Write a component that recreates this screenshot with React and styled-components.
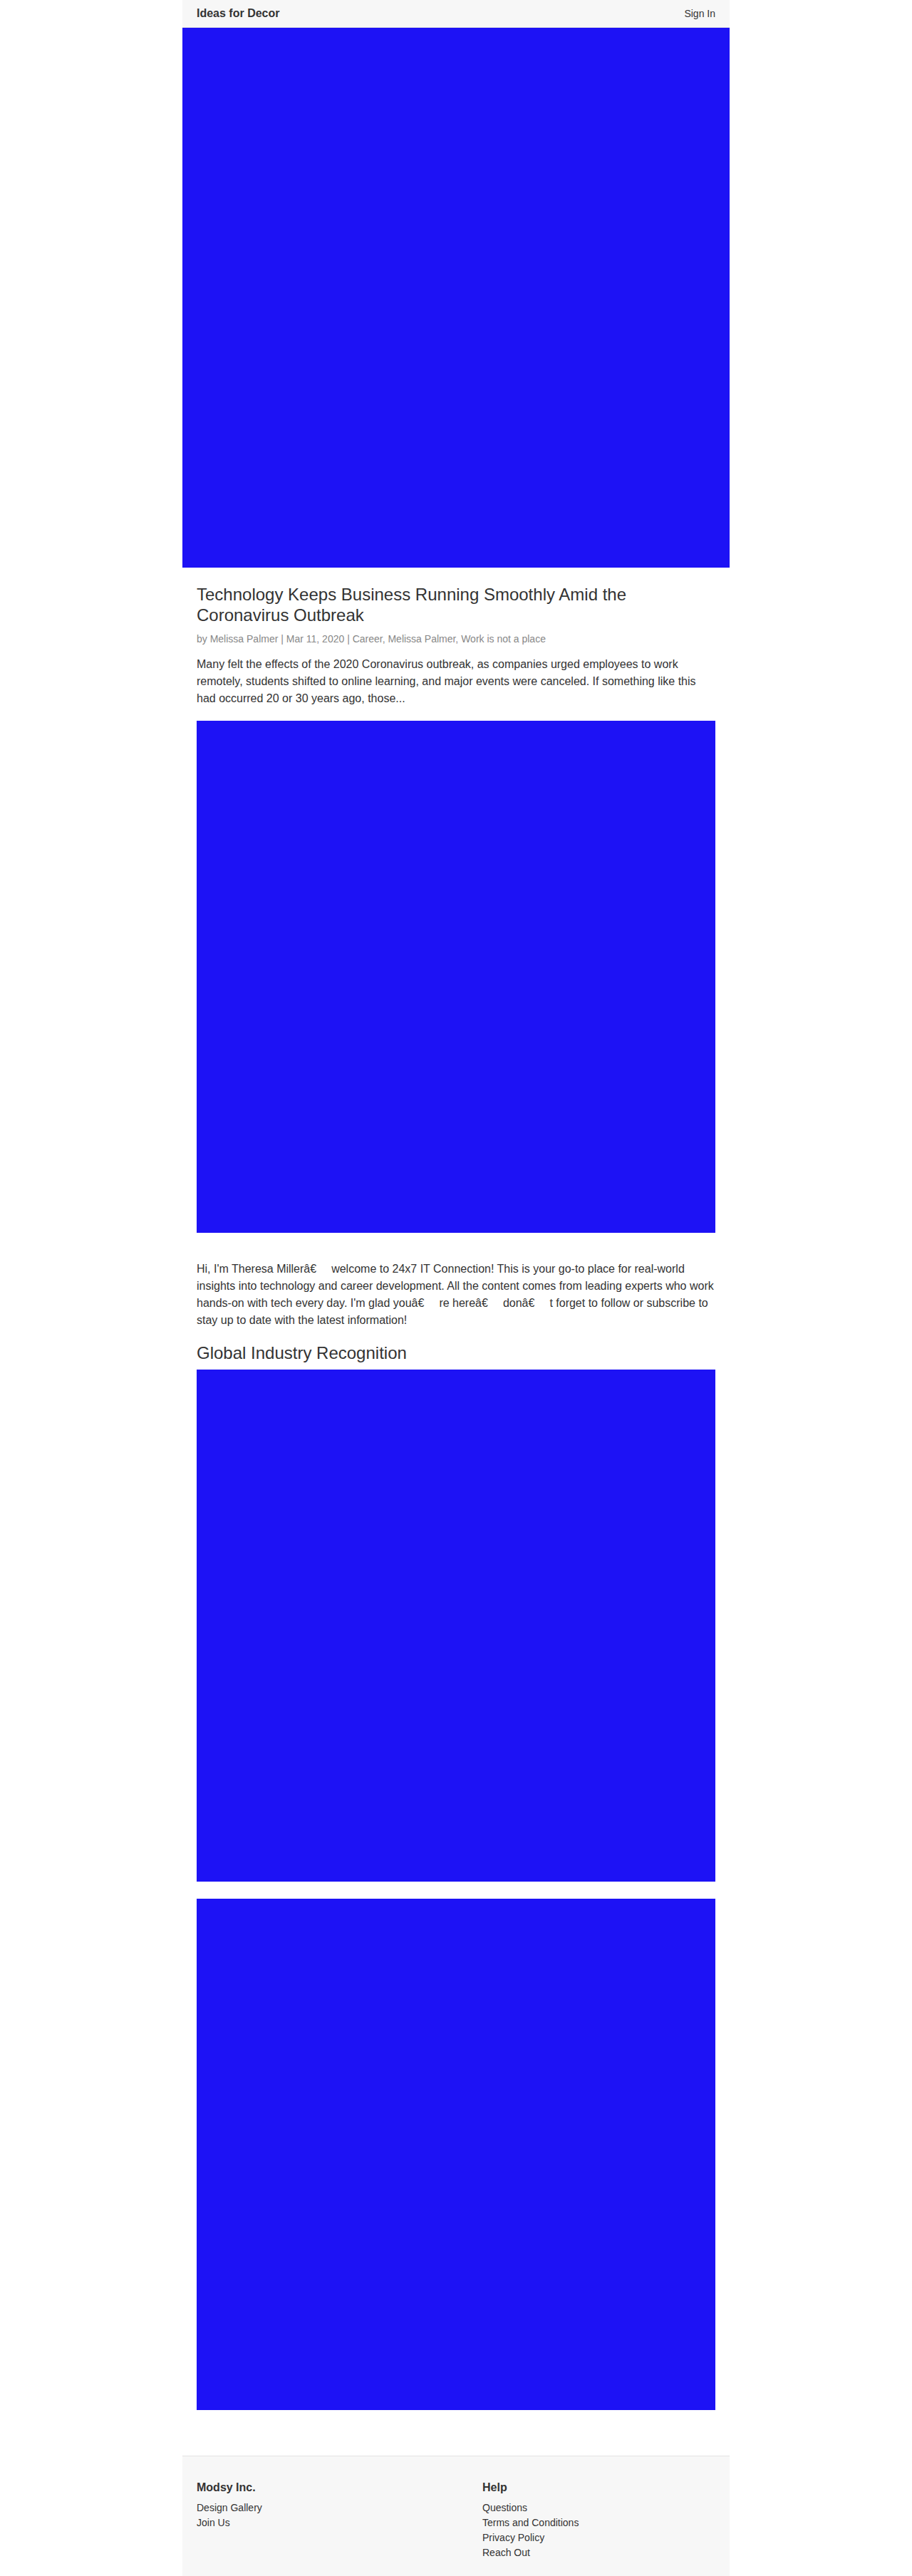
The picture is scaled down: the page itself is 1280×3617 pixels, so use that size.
import styled, { createGlobalStyle } from "styled-components";

const GlobalStyle = createGlobalStyle`
	html, body {
		margin: 0;
		padding: 0;
		background: #fff;
	}
	body {
		font-family: "Liberation Sans", Arial, sans-serif;
		color: #333;
	}
	* {
		box-sizing: border-box;
	}
`;

// the whole page sits in one centred column
const Page = styled.div`
	width: 768px;
	margin: 0 auto;
`;

const Header = styled.header`
	height: 39px;
	padding: 0 20px;
	display: flex;
	align-items: center;
	justify-content: space-between;
	background: #f7f7f7;
	border-bottom: 1px solid #e3e3e3;
`;

const Brand = styled.a`
	font-size: 16px;
	font-weight: 700;
	color: #333;
	text-decoration: none;
`;

const SignIn = styled.a`
	font-size: 14px;
	color: #333;
	text-decoration: none;
`;

const Picture = styled.div`
	width: 100%;
	height: ${(p) => p.$height}px;
	margin-top: ${(p) => p.$gap || 0}px;
	background: #1d12f5;
`;

const Article = styled.main`
	padding: 0 20px;
`;

const Title = styled.h1`
	margin: 24px 0 0;
	font-size: 24px;
	line-height: 28.8px;
	font-weight: 400;
	color: #333;
`;

const Meta = styled.p`
	margin: 8px 0 0;
	font-size: 14px;
	line-height: 20px;
	color: #888;
`;

const Text = styled.p`
	margin: ${(p) => p.$gap}px 0 0;
	font-size: 16px;
	line-height: 24px;
	color: #333;
`;

const Garbled = styled.span`
	margin-right: 8px;
`;

const Heading = styled.h2`
	margin: 20px 0 0;
	font-size: 24px;
	line-height: 28.8px;
	font-weight: 400;
	color: #333;
`;

const Footer = styled.footer`
	margin-top: 64px;
	padding: 32px 20px 22px;
	background: #f7f7f7;
	border-top: 1px solid #e3e3e3;
	display: grid;
	grid-template-columns: 401px 1fr;
`;

const Column = styled.div`
	display: flex;
	flex-direction: column;
`;

const ColumnTitle = styled.h4`
	margin: 0 0 6px;
	font-size: 16px;
	line-height: 24px;
	font-weight: 700;
	color: #333;
`;

const FooterLink = styled.a`
	font-size: 14px;
	line-height: 21px;
	color: #333;
	text-decoration: none;
`;

const footerColumns = [
	{ title: "Modsy Inc.", links: ["Design Gallery", "Join Us"] },
	{ title: "Help", links: ["Questions", "Terms and Conditions", "Privacy Policy", "Reach Out"] },
];

const Broken = () => <Garbled>{"â€\u0099"}</Garbled>;

const App = () => {
	return (
		<>
			<GlobalStyle />
			<Page>
				<Header>
					<Brand href="#">Ideas for Decor</Brand>
					<SignIn href="#">Sign In</SignIn>
				</Header>
				<Picture $height={758} />
				<Article>
					<Title>Technology Keeps Business Running Smoothly Amid the Coronavirus Outbreak</Title>
					<Meta>by Melissa Palmer | Mar 11, 2020 | Career, Melissa Palmer, Work is not a place</Meta>
					<Text $gap={14}>
						Many felt the effects of the 2020 Coronavirus outbreak, as companies urged employees to work remotely, students shifted to online learning, and major events were canceled. If something like this had occurred 20 or 30 years ago, those...
					</Text>
					<Picture $height={719} $gap={19} />
					<Text $gap={39}>
						Hi, I'm Theresa Miller<Broken />welcome to 24x7 IT Connection! This is your go-to place for real-world insights into technology and career development. All the content comes from leading experts who work hands-on with tech every day. I'm glad you<Broken />re here<Broken />don<Broken />t forget to follow or subscribe to stay up to date with the latest information!
					</Text>
					<Heading>Global Industry Recognition</Heading>
					<Picture $height={719} $gap={9} />
					<Picture $height={718} $gap={24} />
				</Article>
				<Footer>
					{footerColumns.map((col) => (
						<Column key={col.title}>
							<ColumnTitle>{col.title}</ColumnTitle>
							{col.links.map((link) => (
								<FooterLink href="#" key={link}>
									{link}
								</FooterLink>
							))}
						</Column>
					))}
				</Footer>
			</Page>
		</>
	);
};

export default App;
